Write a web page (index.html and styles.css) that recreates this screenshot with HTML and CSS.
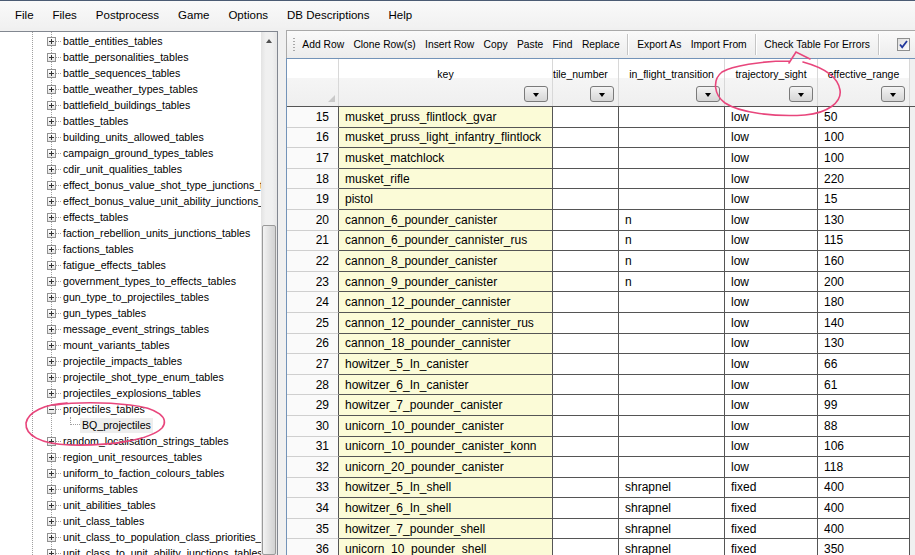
FILE: index.html
```html
<!DOCTYPE html>
<html lang="en">
<head>
    <meta charset="UTF-8">
    <title>DB Editor</title>
    <link rel="stylesheet" href="styles.css">
</head>
<body>

<div class="menubar">
    <span>File</span>
    <span>Files</span>
    <span>Postprocess</span>
    <span>Game</span>
    <span>Options</span>
    <span>DB Descriptions</span>
    <span>Help</span>
</div>

<div class="main">
    <div class="tree-panel">
        <div class="tree">
            <div class="node"><span class="box"></span><span class="link"></span><span class="label">battle_entities_tables</span></div>
            <div class="node"><span class="box"></span><span class="link"></span><span class="label">battle_personalities_tables</span></div>
            <div class="node"><span class="box"></span><span class="link"></span><span class="label">battle_sequences_tables</span></div>
            <div class="node"><span class="box"></span><span class="link"></span><span class="label">battle_weather_types_tables</span></div>
            <div class="node"><span class="box"></span><span class="link"></span><span class="label">battlefield_buildings_tables</span></div>
            <div class="node"><span class="box"></span><span class="link"></span><span class="label">battles_tables</span></div>
            <div class="node"><span class="box"></span><span class="link"></span><span class="label">building_units_allowed_tables</span></div>
            <div class="node"><span class="box"></span><span class="link"></span><span class="label">campaign_ground_types_tables</span></div>
            <div class="node"><span class="box"></span><span class="link"></span><span class="label">cdir_unit_qualities_tables</span></div>
            <div class="node"><span class="box"></span><span class="link"></span><span class="label">effect_bonus_value_shot_type_junctions_tables</span></div>
            <div class="node"><span class="box"></span><span class="link"></span><span class="label">effect_bonus_value_unit_ability_junctions_tables</span></div>
            <div class="node"><span class="box"></span><span class="link"></span><span class="label">effects_tables</span></div>
            <div class="node"><span class="box"></span><span class="link"></span><span class="label">faction_rebellion_units_junctions_tables</span></div>
            <div class="node"><span class="box"></span><span class="link"></span><span class="label">factions_tables</span></div>
            <div class="node"><span class="box"></span><span class="link"></span><span class="label">fatigue_effects_tables</span></div>
            <div class="node"><span class="box"></span><span class="link"></span><span class="label">government_types_to_effects_tables</span></div>
            <div class="node"><span class="box"></span><span class="link"></span><span class="label">gun_type_to_projectiles_tables</span></div>
            <div class="node"><span class="box"></span><span class="link"></span><span class="label">gun_types_tables</span></div>
            <div class="node"><span class="box"></span><span class="link"></span><span class="label">message_event_strings_tables</span></div>
            <div class="node"><span class="box"></span><span class="link"></span><span class="label">mount_variants_tables</span></div>
            <div class="node"><span class="box"></span><span class="link"></span><span class="label">projectile_impacts_tables</span></div>
            <div class="node"><span class="box"></span><span class="link"></span><span class="label">projectile_shot_type_enum_tables</span></div>
            <div class="node"><span class="box"></span><span class="link"></span><span class="label">projectiles_explosions_tables</span></div>
            <div class="node"><span class="box open"></span><span class="link"></span><span class="label">projectiles_tables</span></div>
            <div class="node child"><span class="elbow"></span><span class="label selected">BQ_projectiles</span></div>
            <div class="node"><span class="box"></span><span class="link"></span><span class="label">random_localisation_strings_tables</span></div>
            <div class="node"><span class="box"></span><span class="link"></span><span class="label">region_unit_resources_tables</span></div>
            <div class="node"><span class="box"></span><span class="link"></span><span class="label">uniform_to_faction_colours_tables</span></div>
            <div class="node"><span class="box"></span><span class="link"></span><span class="label">uniforms_tables</span></div>
            <div class="node"><span class="box"></span><span class="link"></span><span class="label">unit_abilities_tables</span></div>
            <div class="node"><span class="box"></span><span class="link"></span><span class="label">unit_class_tables</span></div>
            <div class="node"><span class="box"></span><span class="link"></span><span class="label">unit_class_to_population_class_priorities_tables</span></div>
            <div class="node"><span class="box"></span><span class="link"></span><span class="label">unit_class_to_unit_ability_junctions_tables</span></div>
        </div>
        <div class="vscroll">
            <div class="scroll-up"><i></i></div>
            <div class="thumb"></div>
        </div>
    </div>

    <div class="splitter"></div>

    <div class="editor">
        <div class="toolbar">
            <span class="grip"></span>
            <span class="tb-btn first">Add Row</span>
            <span class="tb-btn">Clone Row(s)</span>
            <span class="tb-btn">Insert Row</span>
            <span class="tb-btn">Copy</span>
            <span class="tb-btn">Paste</span>
            <span class="tb-btn">Find</span>
            <span class="tb-btn">Replace</span>
            <span class="tb-sep"></span>
            <span class="tb-btn">Export As</span>
            <span class="tb-btn">Import From</span>
            <span class="tb-sep"></span>
            <span class="tb-btn">Check Table For Errors</span>
            <span class="tb-sep"></span>
            <svg class="checkbox" width="13" height="13" viewBox="0 0 13 13">
                <defs>
                    <linearGradient id="cbg" x1="0" y1="0" x2="1" y2="1">
                        <stop offset="0" stop-color="#dcdcdc"/>
                        <stop offset="1" stop-color="#ffffff"/>
                    </linearGradient>
                </defs>
                <rect x="0.5" y="0.5" width="12" height="12" fill="url(#cbg)" stroke="#8e8f8f"/>
                <path d="M3 6.5 L5.2 9.3 L10 3" fill="none" stroke="#21379c" stroke-width="1.8"/>
            </svg>
        </div>

        <div class="grid">
            <div class="ghead">
                <div class="hc c-num"><span class="corner"></span></div>
                <div class="hc c-key"><span class="htext">key</span><span class="drop"><i></i></span></div>
                <div class="hc c-tile"><span class="htext">tile_number</span><span class="drop"><i></i></span></div>
                <div class="hc c-flight"><span class="htext">in_flight_transition</span><span class="drop"><i></i></span></div>
                <div class="hc c-sight"><span class="htext">trajectory_sight</span><span class="drop"><i></i></span></div>
                <div class="hc c-range"><span class="htext">effective_range</span><span class="drop"><i></i></span></div>
                <div class="hfill"></div>
            </div>

            <div class="row"><div class="cell c-num">15</div><div class="cell c-key">musket_pruss_flintlock_gvar</div><div class="cell c-tile"></div><div class="cell c-flight"></div><div class="cell c-sight">low</div><div class="cell c-range">50</div><div class="fill"></div></div>
            <div class="row"><div class="cell c-num">16</div><div class="cell c-key">musket_pruss_light_infantry_flintlock</div><div class="cell c-tile"></div><div class="cell c-flight"></div><div class="cell c-sight">low</div><div class="cell c-range">100</div><div class="fill"></div></div>
            <div class="row"><div class="cell c-num">17</div><div class="cell c-key">musket_matchlock</div><div class="cell c-tile"></div><div class="cell c-flight"></div><div class="cell c-sight">low</div><div class="cell c-range">100</div><div class="fill"></div></div>
            <div class="row"><div class="cell c-num">18</div><div class="cell c-key">musket_rifle</div><div class="cell c-tile"></div><div class="cell c-flight"></div><div class="cell c-sight">low</div><div class="cell c-range">220</div><div class="fill"></div></div>
            <div class="row"><div class="cell c-num">19</div><div class="cell c-key">pistol</div><div class="cell c-tile"></div><div class="cell c-flight"></div><div class="cell c-sight">low</div><div class="cell c-range">15</div><div class="fill"></div></div>
            <div class="row"><div class="cell c-num">20</div><div class="cell c-key">cannon_6_pounder_canister</div><div class="cell c-tile"></div><div class="cell c-flight">n</div><div class="cell c-sight">low</div><div class="cell c-range">130</div><div class="fill"></div></div>
            <div class="row"><div class="cell c-num">21</div><div class="cell c-key">cannon_6_pounder_cannister_rus</div><div class="cell c-tile"></div><div class="cell c-flight">n</div><div class="cell c-sight">low</div><div class="cell c-range">115</div><div class="fill"></div></div>
            <div class="row"><div class="cell c-num">22</div><div class="cell c-key">cannon_8_pounder_canister</div><div class="cell c-tile"></div><div class="cell c-flight">n</div><div class="cell c-sight">low</div><div class="cell c-range">160</div><div class="fill"></div></div>
            <div class="row"><div class="cell c-num">23</div><div class="cell c-key">cannon_9_pounder_canister</div><div class="cell c-tile"></div><div class="cell c-flight">n</div><div class="cell c-sight">low</div><div class="cell c-range">200</div><div class="fill"></div></div>
            <div class="row"><div class="cell c-num">24</div><div class="cell c-key">cannon_12_pounder_cannister</div><div class="cell c-tile"></div><div class="cell c-flight"></div><div class="cell c-sight">low</div><div class="cell c-range">180</div><div class="fill"></div></div>
            <div class="row"><div class="cell c-num">25</div><div class="cell c-key">cannon_12_pounder_cannister_rus</div><div class="cell c-tile"></div><div class="cell c-flight"></div><div class="cell c-sight">low</div><div class="cell c-range">140</div><div class="fill"></div></div>
            <div class="row"><div class="cell c-num">26</div><div class="cell c-key">cannon_18_pounder_cannister</div><div class="cell c-tile"></div><div class="cell c-flight"></div><div class="cell c-sight">low</div><div class="cell c-range">130</div><div class="fill"></div></div>
            <div class="row"><div class="cell c-num">27</div><div class="cell c-key">howitzer_5_In_canister</div><div class="cell c-tile"></div><div class="cell c-flight"></div><div class="cell c-sight">low</div><div class="cell c-range">66</div><div class="fill"></div></div>
            <div class="row"><div class="cell c-num">28</div><div class="cell c-key">howitzer_6_In_canister</div><div class="cell c-tile"></div><div class="cell c-flight"></div><div class="cell c-sight">low</div><div class="cell c-range">61</div><div class="fill"></div></div>
            <div class="row"><div class="cell c-num">29</div><div class="cell c-key">howitzer_7_pounder_canister</div><div class="cell c-tile"></div><div class="cell c-flight"></div><div class="cell c-sight">low</div><div class="cell c-range">99</div><div class="fill"></div></div>
            <div class="row"><div class="cell c-num">30</div><div class="cell c-key">unicorn_10_pounder_canister</div><div class="cell c-tile"></div><div class="cell c-flight"></div><div class="cell c-sight">low</div><div class="cell c-range">88</div><div class="fill"></div></div>
            <div class="row"><div class="cell c-num">31</div><div class="cell c-key">unicorn_10_pounder_canister_konn</div><div class="cell c-tile"></div><div class="cell c-flight"></div><div class="cell c-sight">low</div><div class="cell c-range">106</div><div class="fill"></div></div>
            <div class="row"><div class="cell c-num">32</div><div class="cell c-key">unicorn_20_pounder_canister</div><div class="cell c-tile"></div><div class="cell c-flight"></div><div class="cell c-sight">low</div><div class="cell c-range">118</div><div class="fill"></div></div>
            <div class="row"><div class="cell c-num">33</div><div class="cell c-key">howitzer_5_In_shell</div><div class="cell c-tile"></div><div class="cell c-flight">shrapnel</div><div class="cell c-sight">fixed</div><div class="cell c-range">400</div><div class="fill"></div></div>
            <div class="row"><div class="cell c-num">34</div><div class="cell c-key">howitzer_6_In_shell</div><div class="cell c-tile"></div><div class="cell c-flight">shrapnel</div><div class="cell c-sight">fixed</div><div class="cell c-range">400</div><div class="fill"></div></div>
            <div class="row"><div class="cell c-num">35</div><div class="cell c-key">howitzer_7_pounder_shell</div><div class="cell c-tile"></div><div class="cell c-flight">shrapnel</div><div class="cell c-sight">fixed</div><div class="cell c-range">400</div><div class="fill"></div></div>
            <div class="row"><div class="cell c-num">36</div><div class="cell c-key">unicorn_10_pounder_shell</div><div class="cell c-tile"></div><div class="cell c-flight">shrapnel</div><div class="cell c-sight">fixed</div><div class="cell c-range">350</div><div class="fill"></div></div>
        </div>
    </div>
</div>

<!-- hand drawn marks on top of the screenshot -->
<svg class="marks" width="915" height="555" viewBox="0 0 915 555">
    <path d="M790 61 C760 61 732 66 722 72 C712 80 714 95 725 103 C740 113 775 117 805 115 C828 113 842 102 840 90 C838 78 825 68 803 62 M789 63 L796 52 L810 59"/>
    <path d="M67 403 C45 404 28 412 26 423 C25 435 40 444 70 445 C110 446 150 440 162 428 C170 418 158 408 130 405 C105 402 75 402 55 405"/>
</svg>

</body>
</html>
```

FILE: styles.css
```css
body {
    margin: 0;
    width: 915px;
    height: 555px;
    overflow: hidden;
    position: relative;
    background: #f0f0f0;
    font-family: "Liberation Sans", Arial, sans-serif;
    color: #000;
}

/* menu */
.menubar {
    height: 27px;
    border-top: 1px solid #4b5b73;
    background: linear-gradient(#f9f9f9, #f1f1f1);
    display: flex;
    align-items: center;
    gap: 19px;
    padding-left: 15px;
    font-size: 11.5px;
}

.main {
    display: flex;
    height: 527px;
}

/* left tree */
.tree-panel {
    width: 278px;
    margin-top: 3px;
    border-top: 1px solid #828790;
    border-right: 1px solid #828790;
    box-sizing: border-box;
    background: #fff;
    display: flex;
}
.tree {
    flex: 1;
    overflow: hidden;
    padding-top: 1px;
    font-size: 10.6px;
    background-image:
        linear-gradient(#a0a0a0 50%, transparent 50%),
        linear-gradient(#a0a0a0 50%, transparent 50%);
    background-position: 32px 0, 51px 0;
    background-size: 1px 2px;
    background-repeat: repeat-y;
}
.node {
    height: 16px;
    display: flex;
    align-items: center;
    padding-left: 47px;
    white-space: nowrap;
}
.box {
    flex: none;
    width: 9px;
    height: 9px;
    box-sizing: border-box;
    border: 1px solid #919191;
    background:
        linear-gradient(#333, #333) center / 5px 1px no-repeat,
        linear-gradient(#333, #333) center / 1px 5px no-repeat,
        linear-gradient(#fff, #e4e4e4);
}
.box.open {
    background:
        linear-gradient(#333, #333) center / 5px 1px no-repeat,
        linear-gradient(#fff, #e4e4e4);
}
.link {
    flex: none;
    width: 6px;
    height: 1px;
    background-image: linear-gradient(to right, #a0a0a0 50%, transparent 50%);
    background-size: 2px 1px;
}
.label {
    padding-left: 1px;
}
.node.child {
    padding-left: 70px;
}
.elbow {
    flex: none;
    align-self: flex-start;
    width: 10px;
    height: 8px;
    box-sizing: border-box;
    border-left: 1px dotted #a0a0a0;
    border-bottom: 1px dotted #a0a0a0;
}
.label.selected {
    padding: 0 2px;
    line-height: 15px;
    background: #eeeeee;
}

.vscroll {
    width: 16px;
    flex: none;
    background: linear-gradient(to right, #e3e3e3, #f0f0f0 30%, #f0f0f0 70%, #e6e6e6);
    display: flex;
    flex-direction: column;
    align-items: center;
}
.scroll-up {
    height: 17px;
    width: 16px;
    display: flex;
    align-items: center;
    justify-content: center;
}
.scroll-up i {
    width: 0;
    height: 0;
    border-left: 3.5px solid transparent;
    border-right: 3.5px solid transparent;
    border-bottom: 4px solid #505050;
    margin-top: 2px;
}
.thumb {
    margin-top: 176px;
    width: 14px;
    height: 340px;
    box-sizing: border-box;
    border: 1px solid #9a9a9a;
    border-radius: 2px;
    background: linear-gradient(to right, #f3f3f3, #e2e2e2 50%, #d2d2d2);
}

.splitter {
    width: 8px;
    flex: none;
}

/* right side */
.editor {
    flex: 1;
    display: flex;
    flex-direction: column;
    margin-top: 2px;
    min-width: 0;
}
.toolbar {
    height: 28px;
    box-sizing: border-box;
    border-top: 1px solid #a9a9a9;
    border-left: 1px solid #a9a9a9;
    background: linear-gradient(#fafafa, #ececec);
    display: flex;
    align-items: center;
    gap: 9.3px;
    font-size: 10.3px;
    white-space: nowrap;
}
.grip {
    width: 2px;
    height: 13px;
    margin-left: 6px;
    margin-right: -2px;
    background-image: linear-gradient(#a8a8a8 50%, transparent 50%);
    background-size: 2px 3px;
}
.tb-sep {
    width: 1px;
    height: 21px;
    background: #c5c5c5;
    border-right: 1px solid #fff;
    margin: 0 -1.5px;
}
.checkbox {
    margin-left: auto;
    margin-right: 5px;
}

.grid {
    flex: 1;
    border-top: 1px solid #7393b8;
    border-left: 1px solid #7393b8;
    background: #f0f0f0;
    overflow: hidden;
}
.ghead {
    display: flex;
    height: 48px;
    border-bottom: 1px solid #555;
    box-sizing: border-box;
}
.hc {
    height: 47px;
    box-sizing: border-box;
    border-right: 1px solid #d8d8d8;
    background: linear-gradient(#ffffff 0, #ffffff 40%, #f5f5f5 41%, #efefef 100%);
    display: flex;
    flex-direction: column;
    align-items: center;
    overflow: hidden;
    flex: none;
}
.hfill {
    flex: 1;
    background: #f0f0f0;
}
.htext {
    margin-top: 9px;
    line-height: 13px;
    font-size: 10.5px;
    white-space: nowrap;
}
.c-tile .htext {
    align-self: flex-start;
}
.drop {
    align-self: flex-end;
    margin: 5px 4px 0 0;
    width: 24px;
    height: 16px;
    box-sizing: border-box;
    border: 1px solid #7a7a7a;
    border-radius: 3px;
    background: linear-gradient(#f4f4f4, #e4e4e4 50%, #d6d6d6);
    display: flex;
    align-items: center;
    justify-content: center;
}
.drop i {
    width: 0;
    height: 0;
    border-left: 3.5px solid transparent;
    border-right: 3.5px solid transparent;
    border-top: 4px solid #000;
    margin-top: 1px;
}
.corner {
    align-self: flex-end;
    margin: auto 3px 4px 0;
    width: 0;
    height: 0;
    border-left: 7px solid transparent;
    border-bottom: 7px solid #c9c9c9;
}

.c-num { width: 52px; }
.c-key { width: 214px; }
.c-tile { width: 66px; }
.c-flight { width: 106px; }
.c-sight { width: 93px; }
.c-range { width: 92px; }

.row {
    display: flex;
    height: 20.6px;
}
.cell {
    flex: none;
    box-sizing: border-box;
    border-right: 1px solid #555;
    border-bottom: 1px solid #555;
    padding-left: 6px;
    display: flex;
    align-items: center;
    font-size: 12px;
    white-space: nowrap;
    overflow: hidden;
    background: #fff;
}
.cell.c-num {
    justify-content: flex-end;
    padding: 0 9px 0 0;
    background: #fafafa;
    border-bottom-color: #cfcfcf;
}
.cell.c-key {
    background: #fbfbd7;
}
.fill {
    flex: 1;
    background: #f0f0f0;
}

.marks {
    position: absolute;
    left: 0;
    top: 0;
    pointer-events: none;
}
.marks path {
    fill: none;
    stroke: #e8467c;
    stroke-width: 1.6;
    stroke-linecap: round;
}
```
